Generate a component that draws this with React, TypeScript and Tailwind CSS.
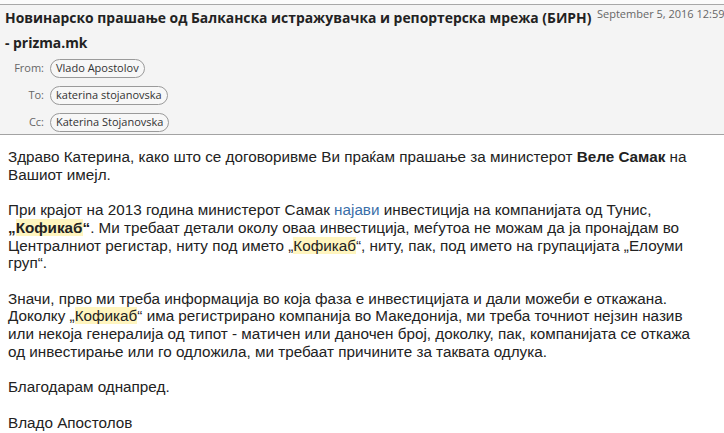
import React from "react";

const hl = "bg-[#fff5bf]";

function Pill({ name }: { name: string }) {
  return (
    <span className="inline-flex h-[19px] items-center rounded-full border border-[#9a9a9a] bg-[#f7f7f7] px-[5px] text-[11px] text-[#333]">
      {name}
    </span>
  );
}

function Who({ label, name }: { label: string; name: string }) {
  return (
    <div className="flex h-[27px] items-center gap-[6px]">
      <span className="w-[39px] text-right text-[11px] text-[#666]">{label}</span>
      <Pill name={name} />
    </div>
  );
}

export default function App() {
  return (
    <div className="h-[433px] w-[724px] overflow-hidden bg-white">
      <div className="h-[5px] border-b border-[#a8a8a8] bg-[#fbfbfb]" />

      {/* Header */}
      <div
        className="h-[130px] overflow-hidden border-b border-[#a3a3a3] bg-[#f4f4f4] pl-[5px]"
        style={{ fontFamily: '"Open Sans", "Noto Sans", sans-serif' }}
      >
        <div className="flex">
          <div className="w-[592px] shrink-0 whitespace-nowrap text-[13.9px] font-bold leading-[25px] text-[#222]">
            Новинарско прашање од Балканска истражувачка и репортерска мрежа (БИРН)
            <br />- prizma.mk
          </div>
          <div className="pt-[2px] text-[11px] leading-[14px] whitespace-nowrap text-[#666]">
            September 5, 2016 12:59
          </div>
        </div>
        <Who label="From:" name="Vlado Apostolov" />
        <Who label="To:" name="katerina stojanovska" />
        <Who label="Cc:" name="Katerina Stojanovska" />
      </div>

      {/* Body */}
      <div
        className="whitespace-nowrap px-2 pt-[13px] text-[15.25px] leading-[17.7px] text-[#222]"
        style={{ fontFamily: '"Liberation Sans", Arial, sans-serif' }}
      >
        <p>
          Здраво Катерина, како што се договоривме Ви праќам прашање за министерот{" "}
          <b>Веле Самак</b> на
          <br />
          Вашиот имејл.
        </p>
        <br />
        <p>
          При крајот на 2013 година министерот Самак{" "}
          <span className="text-[#3a6ea8]">најави</span> инвестиција на компанијата од Тунис,
          <br />
          <b>
            „<span className={hl}>Кофикаб</span>“
          </b>
          . Ми требаат детали околу оваа инвестиција, меѓутоа не можам да ја пронајдам во
          <br />
          Централниот регистар, ниту под името „<span className={hl}>Кофикаб</span>“, ниту, пак, под
          името на групацијата „Елоуми
          <br />
          груп“.
        </p>
        <br />
        <p>
          Значи, прво ми треба информација во која фаза е инвестицијата и дали можеби е откажана.
          <br />
          Доколку „<span className={hl}>Кофикаб</span>“ има регистрирано компанија во Македонија, ми
          треба точниот нејзин назив
          <br />
          или некоја генералија од типот - матичен или даночен број, доколку, пак, компанијата се
          откажа
          <br />
          од инвестирање или го одложила, ми требаат причините за таквата одлука.
        </p>
        <br />
        <p>Благодарам однапред.</p>
        <br />
        <p>Владо Апостолов</p>
      </div>
    </div>
  );
}
